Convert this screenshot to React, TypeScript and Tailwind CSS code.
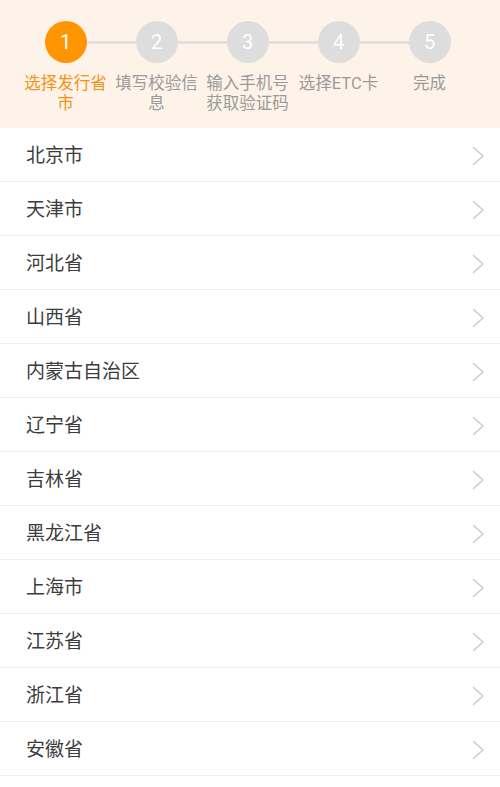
import React from 'react';

const steps = [
    { label: '选择发行省市', active: true },
    { label: '填写校验信息', active: false },
    { label: '输入手机号获取验证码', active: false },
    { label: '选择ETC卡', active: false },
    { label: '完成', active: false },
];

const provinces = [
    '北京市', '天津市', '河北省', '山西省', '内蒙古自治区', '辽宁省',
    '吉林省', '黑龙江省', '上海市', '江苏省', '浙江省', '安徽省',
];

const Chevron: React.FC = () => (
    <svg width="13" height="20" viewBox="0 0 13 20" fill="none">
        <path d="M1.5 1.5 L11 10 L1.5 18.5" stroke="#cccccc" strokeWidth="1.6" strokeLinecap="round" strokeLinejoin="round" />
    </svg>
);

const App: React.FC = () => {
    return (
        <div className="min-h-screen bg-white font-['Roboto','Noto_Sans_CJK_SC',sans-serif]">
            {/* Steps */}
            <div className="flex bg-[#fef3e8] pl-[20px] pt-[21px] pb-[14px]">
                {steps.map((step, i) => (
                    <div key={step.label} className="flex w-[91px] flex-col items-center">
                        <div className="flex w-full items-center">
                            <div className={`h-[3px] flex-1 ${i === 0 ? 'bg-transparent' : 'bg-[#e0e0e0]'}`} />
                            <div
                                className={`flex h-[42px] w-[42px] items-center justify-center rounded-full text-[20px] text-white ${
                                    step.active ? 'bg-[#ff9500]' : 'bg-[#dddddd]'
                                }`}
                            >
                                {i + 1}
                            </div>
                            <div className={`h-[3px] flex-1 ${i === steps.length - 1 ? 'bg-transparent' : 'bg-[#e0e0e0]'}`} />
                        </div>
                        <p
                            className={`mt-[11px] w-full text-center text-[16.5px] leading-[20px] ${
                                step.active ? 'text-[#f39217]' : 'text-[#9a9a9a]'
                            }`}
                        >
                            {step.label}
                        </p>
                    </div>
                ))}
            </div>

            {/* Province list */}
            <ul>
                {provinces.map((name) => (
                    <li
                        key={name}
                        className="flex h-[54px] items-center justify-between border-b border-[#efefef] pl-[26px] pr-[15px] pt-[3px]"
                    >
                        <span className="text-[19px] text-[#3c3c3c]">{name}</span>
                        <Chevron />
                    </li>
                ))}
            </ul>
        </div>
    );
};

export default App;
